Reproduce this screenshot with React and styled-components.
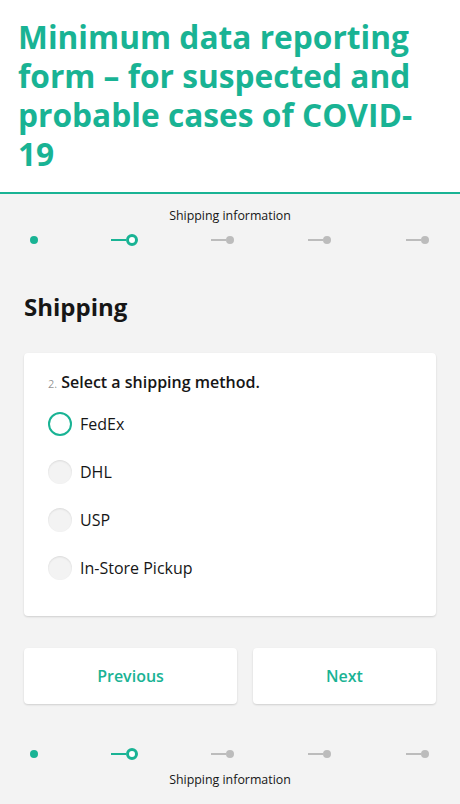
import styled, { createGlobalStyle } from 'styled-components'

const GlobalStyle = createGlobalStyle`
  * { box-sizing: border-box; }
  body {
    margin: 0;
    background: #f3f3f3;
    font-family: 'Open Sans', 'Liberation Sans', sans-serif;
    color: #161616;
  }
`

const Page = styled.div`
  width: 460px;
  min-height: 804px;
  background: #f3f3f3;
`

const Header = styled.header`
  background: #ffffff;
  padding: 17px 18px 19px;
  border-bottom: 2px solid #19b394;
`

const Title = styled.h1`
  margin: 0;
  font-size: 31.7px;
  line-height: 39px;
  font-weight: 700;
  color: #19b394;
`

const Body = styled.main`
  padding: 0 24px;
`

const Progress = styled.div`
  display: flex;
  flex-direction: ${({ bottom }) => (bottom ? 'column-reverse' : 'column')};
  align-items: center;
  gap: ${({ bottom }) => (bottom ? '12px' : '10px')};
  margin: 0 -24px;
  padding-top: ${({ bottom }) => (bottom ? '44px' : '14px')};
`

const ProgressLabel = styled.div`
  font-size: 12.4px;
  line-height: 16px;
  color: #161616;
`

const Steps = styled.div`
  display: flex;
  align-items: center;
  width: 100%;
  height: 12px;
  padding: 0 31px 0 30px;
`

const Step = styled.div`
  display: flex;
  align-items: center;
  justify-content: flex-end;
  flex: ${({ first }) => (first ? '0 0 8px' : '1')};
`

const Connector = styled.span`
  width: 15px;
  height: 2px;
  background: ${({ done }) => (done ? '#19b394' : '#bcbcbc')};
`

const Dot = styled.span`
  width: 8px;
  height: 8px;
  border-radius: 50%;
  background: ${({ done }) => (done ? '#19b394' : '#bcbcbc')};
`

const Ring = styled.span`
  width: 12px;
  height: 12px;
  margin-right: -2px;
  border-radius: 50%;
  border: 3px solid #19b394;
  background: #ffffff;
`

const PageTitle = styled.h2`
  margin: 45px 0 0;
  font-size: 24px;
  line-height: 32px;
  font-weight: 700;
  color: #161616;
`

const Card = styled.section`
  margin-top: 30px;
  background: #ffffff;
  border-radius: 4px;
  box-shadow: 0 1px 2px rgba(0, 0, 0, 0.15);
  padding: 17px 24px 36px;
`

const Question = styled.div`
  font-size: 16px;
  line-height: 24px;
  font-weight: 600;
  color: #161616;
`

const Number = styled.span`
  font-size: 11px;
  font-weight: 400;
  color: rgba(0, 0, 0, 0.45);
  margin-right: 4px;
`

const Options = styled.div`
  display: flex;
  flex-direction: column;
  gap: 24px;
  margin-top: 16px;
`

const Option = styled.label`
  display: flex;
  align-items: center;
  gap: 8px;
  font-size: 16px;
  line-height: 24px;
  color: #161616;
`

const Radio = styled.span`
  width: 24px;
  height: 24px;
  border-radius: 50%;
  background: ${({ focused }) => (focused ? '#ffffff' : '#f3f3f3')};
  border: ${({ focused }) => (focused ? '2px solid #19b394' : 'none')};
  box-shadow: ${({ focused }) =>
    focused ? 'none' : 'inset 0 1px 2px rgba(0, 0, 0, 0.1)'};
`

const Buttons = styled.div`
  display: flex;
  gap: 16px;
  margin-top: 32px;
`

const Button = styled.button`
  flex: 0 0 ${({ width }) => width}px;
  height: 56px;
  border: none;
  border-radius: 4px;
  background: #ffffff;
  box-shadow: 0 1px 2px rgba(0, 0, 0, 0.15);
  font-family: inherit;
  font-size: 16px;
  font-weight: 600;
  color: #19b394;
`

const options = ['FedEx', 'DHL', 'USP', 'In-Store Pickup']

function ProgressBar({ bottom }) {
  return (
    <Progress bottom={bottom}>
      <ProgressLabel>Shipping information</ProgressLabel>
      <Steps>
        <Step first>
          <Dot done />
        </Step>
        <Step>
          <Connector done />
          <Ring />
        </Step>
        {[0, 1, 2].map(i => (
          <Step key={i}>
            <Connector />
            <Dot />
          </Step>
        ))}
      </Steps>
    </Progress>
  )
}

export default function App() {
  return (
    <Page>
      <GlobalStyle />
      <Header>
        <Title>
          Minimum data reporting form – for suspected and probable cases of
          COVID-19
        </Title>
      </Header>
      <Body>
        <ProgressBar />
        <PageTitle>Shipping</PageTitle>
        <Card>
          <Question>
            <Number>2.</Number>
            Select a shipping method.
          </Question>
          <Options>
            {options.map((o, i) => (
              <Option key={o}>
                <Radio focused={i === 0} />
                {o}
              </Option>
            ))}
          </Options>
        </Card>
        <Buttons>
          <Button width={213}>Previous</Button>
          <Button width={183}>Next</Button>
        </Buttons>
        <ProgressBar bottom />
      </Body>
    </Page>
  )
}
